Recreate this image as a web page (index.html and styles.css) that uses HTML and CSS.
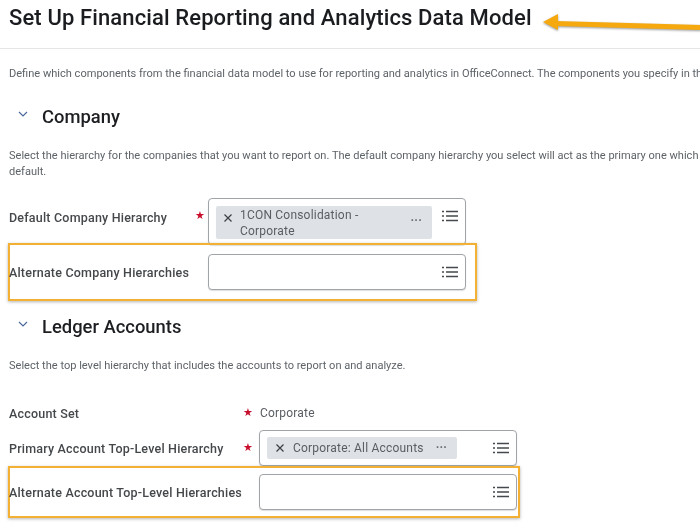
FILE: index.html
```html
<!DOCTYPE html>
<html lang="en">
<head>
<meta charset="utf-8">
<title>Set Up Financial Reporting and Analytics Data Model</title>
<link rel="stylesheet" href="styles.css">
</head>
<body>
<main class="page">
  <header class="head"><h1>Set Up Financial Reporting and Analytics Data Model</h1></header>
  <p class="intro">Define which components from the financial data model to use for reporting and analytics in OfficeConnect. The components you specify in this task</p>

  <section class="company">
    <h2 class="sec"><svg class="chev" viewBox="0 0 10 6"><path d="M1 1l4 4 4-4"/></svg>Company</h2>
    <p class="desc">Select the hierarchy for the companies that you want to report on. The default company hierarchy you select will act as the primary one which will be used by<br>default.</p>
    <div class="row r1">
      <label>Default Company Hierarchy</label><span class="star">★</span>
      <div class="box tall">
        <div class="chip wide"><svg class="x" viewBox="0 0 10 10"><path d="M1.5 1.5l7 7M8.5 1.5l-7 7"/></svg><span class="chiptext">1CON Consolidation -<br>Corporate</span><span class="dots">···</span></div>
        <svg class="list" viewBox="0 0 16 12"><path d="M4 1.5h12M4 6h12M4 10.5h12M0 1.5h2M0 6h2M0 10.5h2"/></svg>
      </div>
    </div>
    <div class="row hl hl1">
      <label>Alternate Company Hierarchies</label>
      <div class="box"><svg class="list" viewBox="0 0 16 12"><path d="M4 1.5h12M4 6h12M4 10.5h12M0 1.5h2M0 6h2M0 10.5h2"/></svg></div>
    </div>
  </section>

  <section class="ledger">
    <h2 class="sec"><svg class="chev" viewBox="0 0 10 6"><path d="M1 1l4 4 4-4"/></svg>Ledger Accounts</h2>
    <p class="desc">Select the top level hierarchy that includes the accounts to report on and analyze.</p>
    <div class="row l0">
      <label>Account Set</label><span class="star">★</span><span class="value">Corporate</span>
    </div>
    <div class="row l1">
      <label>Primary Account Top-Level Hierarchy</label><span class="star">★</span>
      <div class="box"><div class="chip"><svg class="x" viewBox="0 0 10 10"><path d="M1.5 1.5l7 7M8.5 1.5l-7 7"/></svg><span class="chiptext">Corporate: All Accounts</span><span class="dots">···</span></div>
        <svg class="list" viewBox="0 0 16 12"><path d="M4 1.5h12M4 6h12M4 10.5h12M0 1.5h2M0 6h2M0 10.5h2"/></svg></div>
    </div>
    <div class="row hl hl2">
      <label>Alternate Account Top-Level Hierarchies</label>
      <div class="box"><svg class="list" viewBox="0 0 16 12"><path d="M4 1.5h12M4 6h12M4 10.5h12M0 1.5h2M0 6h2M0 10.5h2"/></svg></div>
    </div>
  </section>
</main>
<svg class="arrow" viewBox="0 0 160 24"><path class="arrow-shaft" d="M160 12.5L14 8.5"/><path class="arrow-head" d="M2 7l15-8v16z"/></svg>
</body>
</html>
```
FILE: styles.css
```css
* { box-sizing: border-box; }
html, body { margin: 0; background: #fff; }
body { width: 700px; height: 524px; overflow: hidden; position: relative; font-family: Roboto, "Noto Sans", sans-serif; color: #333; }
.page { filter: blur(0.35px); }
.head { height: 49px; padding: 5px 0 0 9px; border-bottom: 1px solid #e4e6e8; }
h1 { margin: 0; font-size: 22px; line-height: 26px; font-weight: 500; color: #1a1c1f; white-space: nowrap; letter-spacing: 0.12px; }
.intro { margin: 18px 0 0 9px; font-size: 11.05px; line-height: 14px; height: 14px; color: #5e6368; white-space: nowrap; overflow: hidden; }
.sec { display: flex; align-items: center; margin: 0; font-size: 18.4px; line-height: 22px; font-weight: 500; color: #1c1e21; white-space: nowrap; }
.chev { width: 10px; height: 6px; margin: -6px 14px 0 18px; fill: none; stroke: #4a6a9c; stroke-width: 1.2; }
.company { margin-top: 25px; }
.ledger { margin-top: 15px; }
.desc { margin: 20px 0 0 9px; width: 691px; height: 32px; font-size: 11.05px; line-height: 16px; color: #5e6368; white-space: nowrap; overflow: hidden; }
.ledger .desc { height: 16px; margin-top: 20px; }
.row { display: flex; align-items: center; position: relative; }
.row label { font-size: 12.5px; font-weight: 500; color: #45484b; white-space: nowrap; letter-spacing: 0.2px; }
.star { position: absolute; color: #c8102e; font-family: "DejaVu Sans", sans-serif; font-size: 11px; line-height: 14px; }
.r1 { margin-top: 18px; padding-left: 9px; height: 47px; }
.r1 .star { left: 195px; top: 11px; }
.r1 label { margin-top: -8px; }
.box { margin-left: auto; width: 258px; height: 36px; border: 1.5px solid #a0a4a8; border-radius: 4px; background: #fff; position: relative; display: flex; align-items: center; padding-left: 7px; box-shadow: 0 1px 1px rgba(90,90,90,.2); }
.r1 .box { position: absolute; left: 208px; top: 0; height: 47px; align-items: flex-start; padding-top: 7px; }
.list { position: absolute; right: 7px; top: 50%; margin-top: -6px; width: 16px; height: 12px; fill: none; stroke: #45494e; stroke-width: 1.3; }
.r1 .list { top: 11px; margin-top: 0; }
.chip { display: flex; align-items: center; height: 22px; background: #dee1e5; border-radius: 2px; width: 190px; font-size: 12px; color: #5a5e63; padding-left: 8px; white-space: nowrap; letter-spacing: 0.2px; }
.chip.wide { width: 216px; height: 33px; line-height: 16px; padding-left: 7px; }
.x { width: 10px; height: 10px; flex: none; fill: none; stroke: #3c4044; stroke-width: 1.2; margin-right: 8px; }
.wide .x { margin-right: 7px; margin-top: -10px; }
.chiptext { flex: none; }
.dots { margin-left: 12px; font-size: 12px; font-weight: 700; color: #6b6f74; }
.wide .dots { margin-left: auto; margin-right: 10px; margin-top: -3px; }
.hl { width: 469px; margin-left: 8px; height: 57px; border: 2px solid #f2b134; box-shadow: 0 1px 3px rgba(90,90,90,.45); padding: 0 9px 0 0; }
.hl label { margin-left: -1px; }
.hl1 { height: 58px; margin-top: -2px; }
.l0 { margin-top: 31px; height: 16px; padding-left: 9px; }
.l0 .star { left: 243px; top: 1px; }
.value { position: absolute; left: 260px; top: 1px; font-size: 12px; color: #5a5e63; letter-spacing: 0.2px; }
.l1 { margin-top: 9px; padding-left: 9px; height: 36px; }
.l1 label { margin-top: 1px; }
.l1 .star { left: 243px; top: 11px; }
.l1 .box { position: absolute; left: 259px; top: 0; }
.hl2 { width: 512px; height: 52px; margin-top: 0; padding-right: 0; }
.hl2 .box { position: absolute; left: 249px; top: 6px; }
.arrow { position: absolute; left: 541px; top: 15px; width: 160px; height: 24px; overflow: visible; filter: drop-shadow(0 1.5px 1px rgba(70,70,70,.55)); }
.arrow-shaft { stroke: #f5a90f; stroke-width: 5; fill: none; }
.arrow-head { fill: #f5a90f; }
```
